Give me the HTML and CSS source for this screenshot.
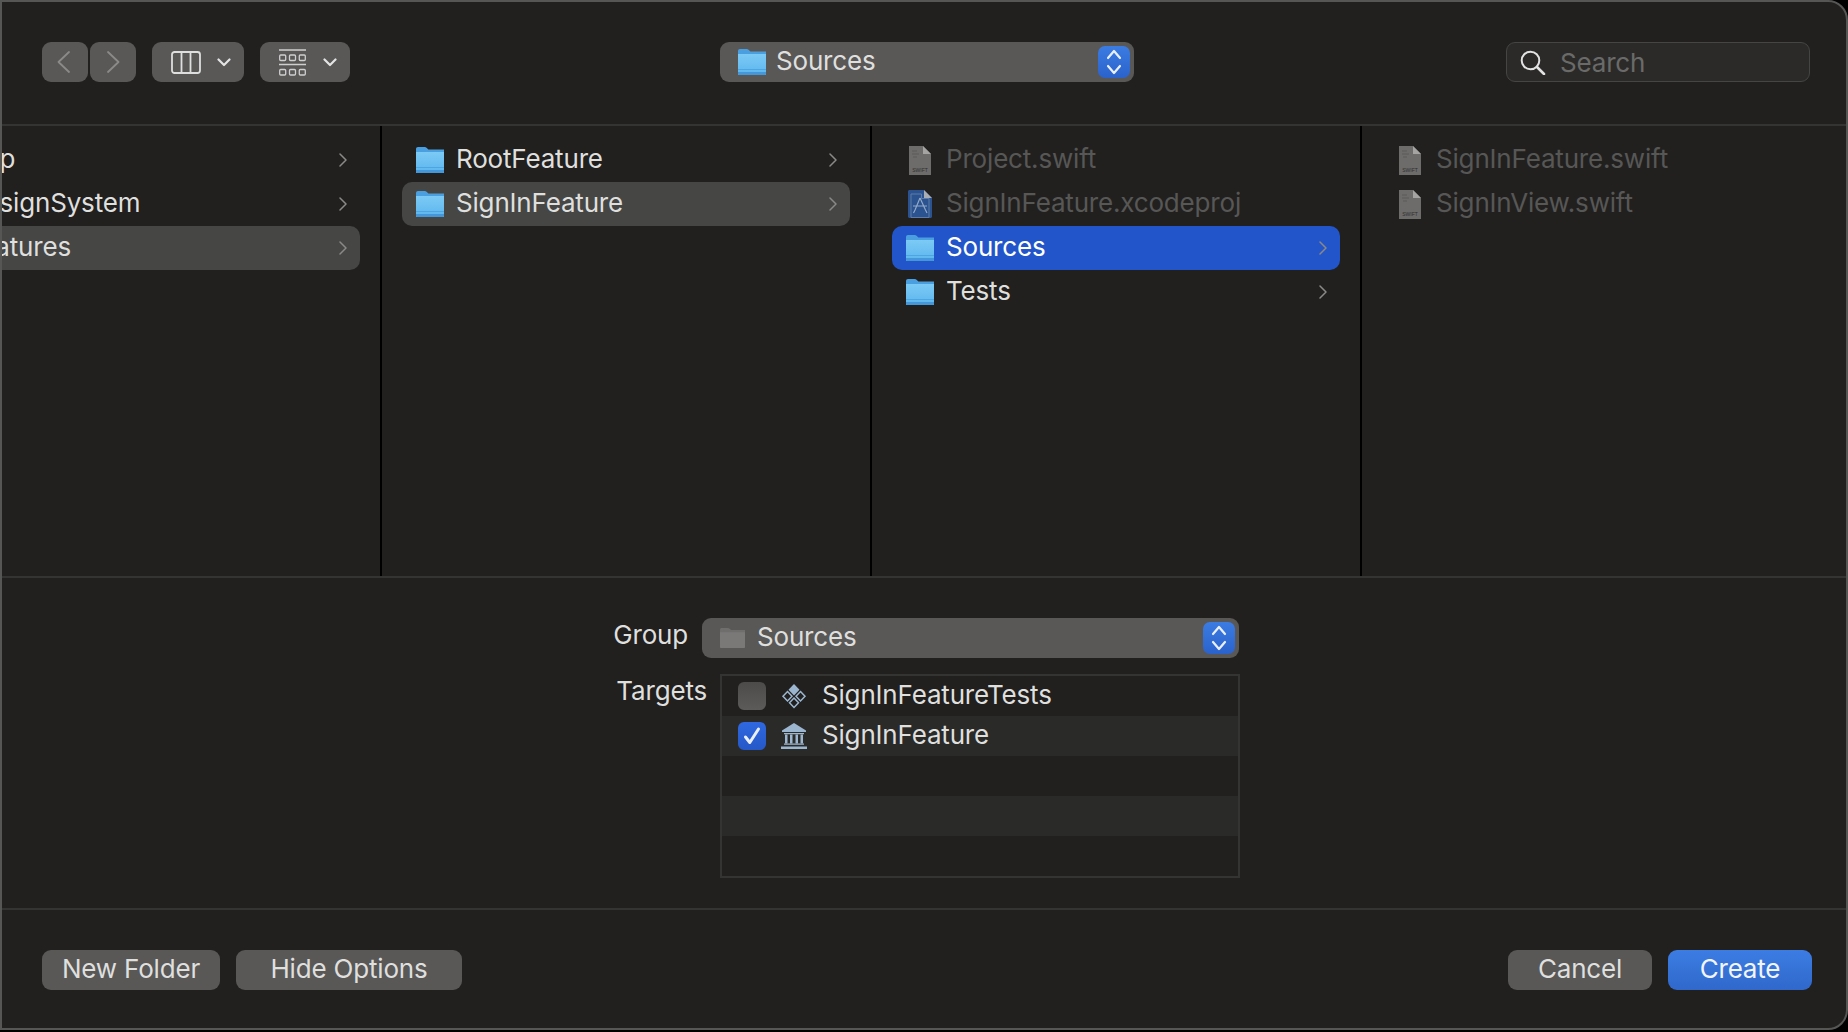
FILE: index.html
```html
<!DOCTYPE html>
<html lang="en">
<head>
    <meta charset="UTF-8">
    <meta name="viewport" content="width=device-width, initial-scale=1.0">
    <title>New File</title>
    <link rel="stylesheet" href="styles.css">
</head>
<body>
    <!-- icons used further down -->
    <svg class="sprite" aria-hidden="true">
        <defs>
            <linearGradient id="folderFill" x1="0" y1="0" x2="0" y2="1">
                <stop offset="0" stop-color="#7ccaf5"/>
                <stop offset="1" stop-color="#5cb6ee"/>
            </linearGradient>
        </defs>
        <symbol id="folder" viewBox="0 0 28 26">
            <path d="M0 2.2C0 .9.8 0 2 0h6.6c1 0 1.6.4 2.2 1l1.6 1.6H28V26H0z" fill="#4a9fe0"/>
            <path d="M0 5h28v19.300c0 .9-.7 1.600-1.600 1.600H1.600C.7 25.900 0 25.200 0 24.300z" fill="url(#folderFill)"/>
            <path d="M0 20h28v1H0z" fill="#4fa5e2"/>
            <path d="M0 23h28v1.400c0 .9-.7 1.600-1.600 1.600H1.600C.7 26 0 25.300 0 24.400z" fill="#4497d8"/>
        </symbol>
        <symbol id="folderGrey" viewBox="0 0 28 26">
            <path d="M0 2.2C0 .9.8 0 2 0h6.6c1 0 1.6.4 2.2 1l1.6 1.6H28V26H0z" fill="#6f6e6d"/>
            <path d="M0 5.400h28v18.900c0 .9-.7 1.600-1.600 1.600H1.600C.7 25.900 0 25.200 0 24.300z" fill="#7a7978"/>
        </symbol>
        <symbol id="swiftFile" viewBox="0 0 22 29">
            <path d="M0 0h14l8 8v21H0z" fill="#6d6c6b"/>
            <path d="M14 0l8 8h-8z" fill="#a5a4a3"/>
            <path d="M3 5h5M3 8h7M4 11h4" stroke="#5c5b5a" stroke-width="1" fill="none"/>
            <text x="11" y="26" text-anchor="middle" class="swift-label">SWIFT</text>
        </symbol>
        <symbol id="xcodeFile" viewBox="0 0 24 28">
            <path d="M0 1.500C0 .7.7 0 1.500 0H16l8 8v18.500c0 .8-.7 1.500-1.500 1.500h-21C.7 28 0 27.300 0 26.500z" fill="#2a5390"/>
            <path d="M16 0l8 8h-8z" fill="#a9aeb5"/>
            <path d="M3 4h10.500v4.500H21v19H3z" fill="none" stroke="#5f7ca8" stroke-width="1"/>
            <path d="M12 8l5.500 12M12 8L7 20M5 16h14M7 20l-1.500 3M17.500 20l1.500 3" fill="none" stroke="#93a9c8" stroke-width="1.200"/>
        </symbol>
        <symbol id="chevron" viewBox="0 0 8 14">
            <path d="M1 1l6 6-6 6" fill="none" stroke="#8a8988" stroke-width="1.500" stroke-linecap="round" stroke-linejoin="round"/>
        </symbol>
        <symbol id="caret" viewBox="0 0 14 9">
            <path d="M1.500 1.500L7 7l5.500-5.500" fill="none" stroke="#e4e4e4" stroke-width="2.200" stroke-linecap="round" stroke-linejoin="round"/>
        </symbol>
        <symbol id="updown" viewBox="0 0 16 28">
            <path d="M2 10l6-7 6 7M2 18l6 7 6-7" fill="none" stroke="#eaf0fb" stroke-width="2.200" stroke-linecap="round" stroke-linejoin="round"/>
        </symbol>
    </svg>

    <div class="sheet">
        <header class="toolbar">
            <div class="nav-group">
                <button class="tool-btn nav-btn nav-back">
                    <svg width="13" height="22" viewBox="0 0 13 22"><path d="M12 1L1.500 11 12 21" fill="none" stroke="#8b8a89" stroke-width="1.800" stroke-linecap="round" stroke-linejoin="round"/></svg>
                </button>
                <button class="tool-btn nav-btn">
                    <svg width="13" height="22" viewBox="0 0 13 22"><path d="M1 1l10.500 10L1 21" fill="none" stroke="#8b8a89" stroke-width="1.800" stroke-linecap="round" stroke-linejoin="round"/></svg>
                </button>
            </div>
            <button class="tool-btn view-btn">
                <svg width="30" height="23" viewBox="0 0 30 23"><rect x="1" y="1" width="28" height="21" rx="2.500" fill="none" stroke="#dedede" stroke-width="1.800"/><path d="M10.500 1v21M19.500 1v21" stroke="#dedede" stroke-width="1.800"/></svg>
                <svg class="caret" width="14" height="9"><use href="#caret"/></svg>
            </button>
            <button class="tool-btn group-btn">
                <svg width="27" height="27" viewBox="0 0 27 27"><path d="M0 1h27M0 15.500h27" stroke="#cfcfcf" stroke-width="1.500"/><g fill="none" stroke="#cfcfcf" stroke-width="1.300"><rect x=".7" y="6" width="6" height="5.500" rx="1"/><rect x="10.500" y="6" width="6" height="5.500" rx="1"/><rect x="20.300" y="6" width="6" height="5.500" rx="1"/><rect x=".7" y="20.500" width="6" height="5.500" rx="1"/><rect x="10.500" y="20.500" width="6" height="5.500" rx="1"/><rect x="20.300" y="20.500" width="6" height="5.500" rx="1"/></g></svg>
                <svg class="caret" width="14" height="9"><use href="#caret"/></svg>
            </button>
            <div class="popup location-popup">
                <svg class="popup-icon" width="28" height="26"><use href="#folder"/></svg>
                <span class="popup-label">Sources</span>
                <span class="stepper"><svg width="16" height="28"><use href="#updown"/></svg></span>
            </div>
            <div class="search">
                <svg width="26" height="25" viewBox="0 0 26 25"><circle cx="10.500" cy="10.500" r="8.800" fill="none" stroke="#e2e2e2" stroke-width="2"/><path d="M17 17l7 7" stroke="#e2e2e2" stroke-width="2.600" stroke-linecap="round"/></svg>
                <span class="search-text">Search</span>
            </div>
        </header>

        <section class="browser">
            <div class="column column-first">
                <div class="row"><svg class="row-icon" width="28" height="26"><use href="#folder"/></svg><span class="row-name">App</span><svg class="row-chevron" width="8" height="14"><use href="#chevron"/></svg></div>
                <div class="row"><svg class="row-icon" width="28" height="26"><use href="#folder"/></svg><span class="row-name">DesignSystem</span><svg class="row-chevron" width="8" height="14"><use href="#chevron"/></svg></div>
                <div class="row row-active"><svg class="row-icon" width="28" height="26"><use href="#folder"/></svg><span class="row-name">Features</span><svg class="row-chevron" width="8" height="14"><use href="#chevron"/></svg></div>
            </div>
            <div class="column">
                <div class="row"><svg class="row-icon" width="28" height="26"><use href="#folder"/></svg><span class="row-name">RootFeature</span><svg class="row-chevron" width="8" height="14"><use href="#chevron"/></svg></div>
                <div class="row row-active"><svg class="row-icon" width="28" height="26"><use href="#folder"/></svg><span class="row-name">SignInFeature</span><svg class="row-chevron" width="8" height="14"><use href="#chevron"/></svg></div>
            </div>
            <div class="column">
                <div class="row row-disabled"><svg class="row-icon" width="22" height="29"><use href="#swiftFile"/></svg><span class="row-name">Project.swift</span></div>
                <div class="row row-disabled"><svg class="row-icon" width="24" height="28"><use href="#xcodeFile"/></svg><span class="row-name">SignInFeature.xcodeproj</span></div>
                <div class="row row-selected"><svg class="row-icon" width="28" height="26"><use href="#folder"/></svg><span class="row-name">Sources</span><svg class="row-chevron" width="8" height="14"><use href="#chevron"/></svg></div>
                <div class="row"><svg class="row-icon" width="28" height="26"><use href="#folder"/></svg><span class="row-name">Tests</span><svg class="row-chevron" width="8" height="14"><use href="#chevron"/></svg></div>
            </div>
            <div class="column column-last">
                <div class="row row-disabled"><svg class="row-icon" width="22" height="29"><use href="#swiftFile"/></svg><span class="row-name">SignInFeature.swift</span></div>
                <div class="row row-disabled"><svg class="row-icon" width="22" height="29"><use href="#swiftFile"/></svg><span class="row-name">SignInView.swift</span></div>
            </div>
        </section>

        <section class="options">
            <div class="option-row">
                <label class="option-label label-group">Group</label>
                <div class="popup group-popup">
                    <svg class="popup-icon" width="25" height="20" viewBox="0 0 28 26" preserveAspectRatio="none"><use href="#folderGrey"/></svg>
                    <span class="popup-label">Sources</span>
                    <span class="stepper"><svg width="16" height="28"><use href="#updown"/></svg></span>
                </div>
            </div>
            <div class="option-row targets-row">
                <label class="option-label label-targets">Targets</label>
                <div class="targets">
                    <div class="target">
                        <span class="check"></span>
                        <svg class="target-icon" width="26" height="26" viewBox="0 0 26 26">
                            <path d="M13 1l5.500 5.800L13 12.500 7.500 6.800z" fill="#9db6cf"/>
                            <g fill="none" stroke="#9db6cf" stroke-width="1.500"><path d="M6.500 8.500l4.500 4.800-4.500 4.700L2 13.300z"/><path d="M19.500 8.500l4.500 4.800-4.500 4.700-4.500-4.700z"/><path d="M13 15l4.500 4.800L13 24.500l-4.500-4.700z"/></g>
                        </svg>
                        <span class="target-name">SignInFeatureTests</span>
                    </div>
                    <div class="target target-alt">
                        <span class="check check-on">
                            <svg width="20" height="20" viewBox="0 0 20 20"><path d="M3.500 11l4.300 5.500L16.500 3" fill="none" stroke="#e9effc" stroke-width="3" stroke-linecap="round" stroke-linejoin="round"/></svg>
                        </span>
                        <svg class="target-icon" width="26" height="26" viewBox="0 0 26 26">
                            <path d="M13 0L25 7.500v1.500H1V7.500z" fill="#9db6cf"/>
                            <path d="M4 11.500h2.500v9H4zM9 11.500h2.500v9H9zM14.500 11.500H17v9h-2.500zM19.500 11.500H22v9h-2.500z" fill="#9db6cf"/>
                            <path d="M3 10h20v1.200H3zM3 20.500h20v1.200H3zM0 23.500h26V26H0z" fill="#9db6cf"/>
                        </svg>
                        <span class="target-name">SignInFeature</span>
                    </div>
                    <div class="target"></div>
                    <div class="target target-alt"></div>
                    <div class="target"></div>
                </div>
            </div>
        </section>

        <footer class="actions">
            <button class="action-btn btn-new">New Folder</button>
            <button class="action-btn btn-hide">Hide Options</button>
            <button class="action-btn btn-cancel">Cancel</button>
            <button class="action-btn btn-create">Create</button>
        </footer>
    </div>
</body>
</html>
```

FILE: styles.css
```css
* {
    box-sizing: border-box;
}
body {
    margin: 0;
    height: 1032px;
    overflow: hidden;
    background-color: #000;
    font-family: 'Inter', 'Liberation Sans', sans-serif;
    font-size: 26px;
    letter-spacing: -0.18px;
    color: #dfdfde;
}
button {
    font-family: inherit;
    font-size: inherit;
    letter-spacing: inherit;
    color: inherit;
    border: none;
    padding: 0;
}
.sprite {
    display: block;
    width: 0;
    height: 0;
}
.swift-label {
    font-family: 'Liberation Sans', sans-serif;
    font-size: 5px;
    letter-spacing: 0;
    fill: #2e2e2d;
}
.sheet {
    height: 1030px;
    background-color: #21201f;
    border: 2px solid #565655;
    border-radius: 0 20px 20px 0;
    overflow: hidden;
    display: flex;
    flex-direction: column;
}

/* toolbar */
.toolbar {
    flex: none;
    height: 124px;
    padding: 40px 36px 0 40px;
    border-bottom: 2px solid #343433;
    display: flex;
    align-items: flex-start;
}
.nav-group {
    display: flex;
    gap: 2px;
}
.tool-btn {
    height: 40px;
    background-color: #595857;
    border-radius: 9px;
    display: flex;
    align-items: center;
}
.nav-btn {
    width: 46px;
    justify-content: center;
}
.nav-back {
    padding-right: 4px;
}
.view-btn {
    width: 92px;
    margin-left: 16px;
    padding-left: 19px;
}
.group-btn {
    width: 90px;
    margin-left: 16px;
    padding-left: 19px;
}
.view-btn .caret {
    margin-left: 16px;
}
.group-btn .caret {
    margin-left: 17px;
}
.popup {
    height: 40px;
    background-color: #595857;
    border-radius: 9px;
    display: flex;
    align-items: center;
}
.popup-label {
    flex: 1;
    padding-bottom: 3px;
}
.stepper {
    flex: none;
    width: 32px;
    height: 32px;
    margin-right: 4px;
    background: linear-gradient(#3b7ce2, #2b62cc);
    border-radius: 7px;
    display: flex;
    align-items: center;
    justify-content: center;
}
.location-popup {
    width: 414px;
    margin-left: 370px;
    padding-left: 18px;
}
.location-popup .popup-icon {
    margin-right: 10px;
}
.search {
    width: 304px;
    height: 40px;
    margin-left: auto;
    padding-left: 13px;
    background-color: #2b2a29;
    border: 1px solid #454544;
    border-radius: 9px;
    display: flex;
    align-items: center;
    gap: 14px;
}
.search-text {
    color: #6a6a69;
}

/* column browser */
.browser {
    flex: none;
    height: 452px;
    border-bottom: 2px solid #343433;
    display: flex;
    overflow: hidden;
}
.column {
    flex: none;
    width: 490px;
    padding: 12px 20px 0;
    border-right: 2px solid #000;
}
.column-first {
    margin-left: -110px;
}
.column-last {
    border-right: none;
}
.row {
    height: 44px;
    padding: 0 14px;
    border-radius: 10px;
    display: flex;
    align-items: center;
}
.row-icon {
    flex: none;
    width: 28px;
    margin-right: 12px;
}
.row-name {
    flex: 1;
    white-space: nowrap;
    padding-bottom: 4px;
}
.row-chevron {
    flex: none;
    margin-right: -1px;
}
.row-active {
    background-color: #464645;
}
.row-selected {
    background-color: #2255c9;
    color: #fff;
}
.row-disabled {
    color: #575756;
}

/* group and targets */
.options {
    flex: none;
    height: 332px;
    padding-top: 40px;
    border-bottom: 2px solid #343433;
}
.option-row {
    display: flex;
    align-items: flex-start;
}
.option-label {
    flex: none;
    text-align: right;
    margin-right: 14px;
}
.label-group {
    width: 686px;
    line-height: 34px;
}
.label-targets {
    width: 705px;
    line-height: 34px;
}
.group-popup {
    width: 537px;
    padding-left: 18px;
}
.group-popup .popup-icon {
    margin-right: 12px;
}
.targets-row {
    margin-top: 16px;
}
.label-targets {
    margin-right: 13px;
}
.targets {
    width: 520px;
    height: 204px;
    border: 2px solid #343433;
}
.target {
    height: 40px;
    padding-left: 16px;
    display: flex;
    align-items: center;
}
.target-alt {
    background-color: #2a2a29;
}
.check {
    flex: none;
    width: 28px;
    height: 28px;
    border-radius: 6px;
    background: linear-gradient(#4c4b4a, #5c5b5a);
    display: flex;
    align-items: center;
    justify-content: center;
}
.check-on {
    background: linear-gradient(#2f68e0, #2558c8);
}
.target-icon {
    flex: none;
    margin: 0 15px;
}
.target-name {
    padding-bottom: 3px;
}

/* bottom buttons */
.actions {
    flex: 1;
    padding: 40px 34px 0 40px;
    display: flex;
    align-items: flex-start;
    gap: 16px;
}
.action-btn {
    height: 40px;
    padding-bottom: 3px;
    background-color: #595857;
    border-radius: 9px;
    text-align: center;
}
.btn-new {
    width: 178px;
}
.btn-hide {
    width: 226px;
}
.btn-cancel {
    width: 144px;
    margin-left: auto;
}
.btn-create {
    width: 144px;
    background: linear-gradient(#3c7de3, #3068cb);
    color: #f2f5fb;
}
```
